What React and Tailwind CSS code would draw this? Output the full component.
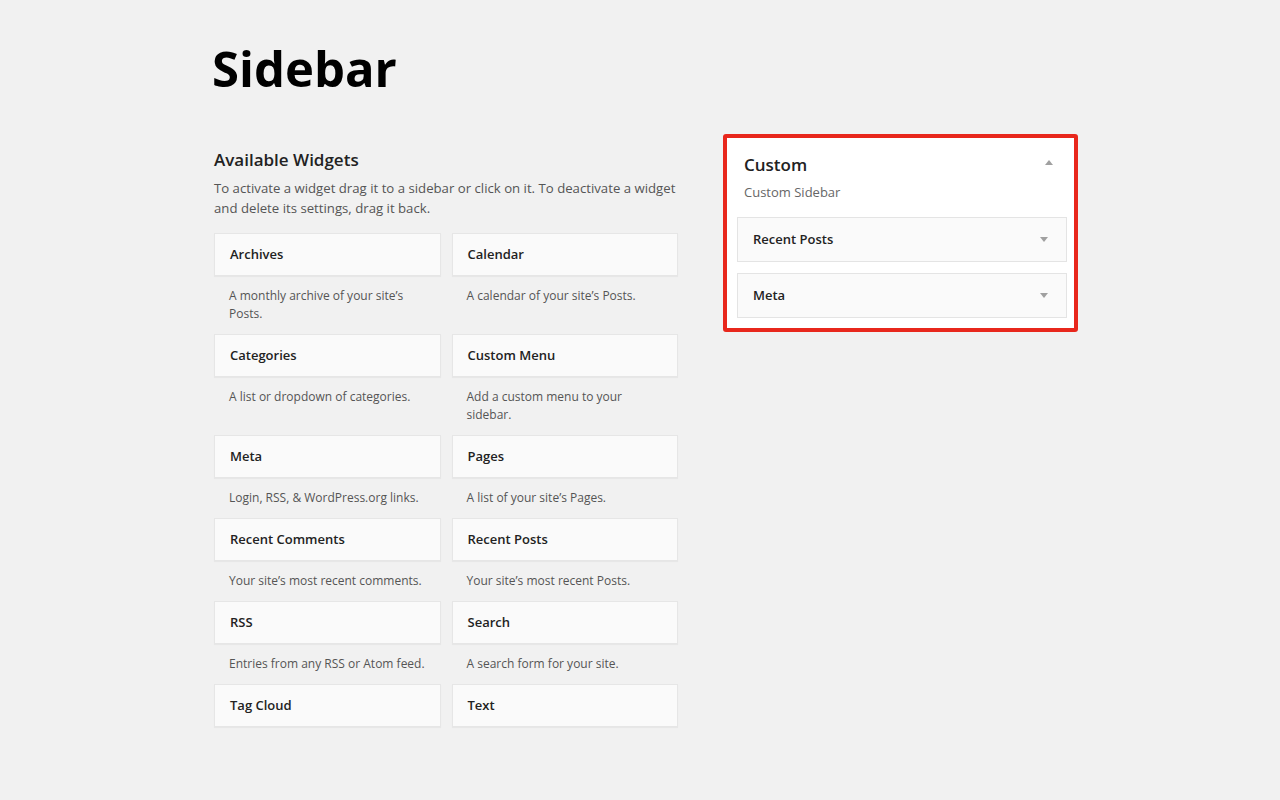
const widgets = [
  ["Archives", "A monthly archive of your site’s Posts."],
  ["Calendar", "A calendar of your site’s Posts."],
  ["Categories", "A list or dropdown of categories."],
  ["Custom Menu", "Add a custom menu to your sidebar."],
  ["Meta", "Login, RSS, & WordPress.org links."],
  ["Pages", "A list of your site’s Pages."],
  ["Recent Comments", "Your site’s most recent comments."],
  ["Recent Posts", "Your site’s most recent Posts."],
  ["RSS", "Entries from any RSS or Atom feed."],
  ["Search", "A search form for your site."],
  ["Tag Cloud", ""],
  ["Text", ""],
];

function Widget({ title, desc }) {
  return (
    <div>
      <div className="h-[43px] bg-[#fafafa] border border-[#e6e6e6] shadow-[0_1px_1px_rgba(0,0,0,0.04)] flex items-center px-[15px] text-[13px] font-semibold text-[#222]">
        {title}
      </div>
      {desc ? (
        <p className="pl-[15px] pr-[12px] pt-[11px] pb-[11px] text-[12px] leading-[18px] text-[#555]">{desc}</p>
      ) : null}
    </div>
  );
}

function Caret({ up }) {
  return (
    <svg width="10" height="6" viewBox="0 0 10 6" className="text-[#a0a0a0]">
      <path d={up ? "M1 6 L5 1 L9 6 Z" : "M1 0 L5 5 L9 0 Z"} fill="currentColor" />
    </svg>
  );
}

export default function App() {
  return (
    <div className="min-h-screen w-full bg-[#f1f1f1]" style={{ fontFamily: '"Open Sans", sans-serif' }}>
      <div className="pl-[212px] pt-[36px]">
        <h1 className="text-[49px] leading-[64px] font-bold text-black">Sidebar</h1>
      </div>
      <div className="flex pl-[214px] pt-[48px] gap-[45px]">
        {/* Available widgets */}
        <div className="w-[464px]">
          <h2 className="text-[17px] leading-[24px] font-semibold text-[#222]">Available Widgets</h2>
          <p className="mt-[6px] text-[13.2px] leading-[20px] text-[#555]">
            To activate a widget drag it to a sidebar or click on it. To deactivate a widget and delete its settings, drag it back.
          </p>
          <div className="mt-[15px] grid grid-cols-2 gap-x-[11px] items-start">
            {widgets.map(([t, d]) => (
              <Widget key={t} title={t} desc={d} />
            ))}
          </div>
        </div>

        {/* Custom sidebar */}
        <div className="-mt-[14px] w-[355px] self-start border-[4px] border-[#e8271c] rounded-[3px] bg-white pl-[10px] pr-[7px] pb-[10px] pt-[12px]">
          <div className="flex items-start justify-between pl-[7px] pr-[13px]">
            <div>
              <div className="text-[17px] leading-[24px] font-semibold text-[#222] pt-[3px]">Custom</div>
              <div className="text-[13px] leading-[18px] text-[#666] mt-[6px]">Custom Sidebar</div>
            </div>
            <div className="pt-[9px]">
              <Caret up />
            </div>
          </div>
          <div className="mt-[16px] flex flex-col gap-[11px]">
            {["Recent Posts", "Meta"].map((t) => (
              <div
                key={t}
                className="h-[45px] bg-[#fafafa] border border-[#e4e4e4] flex items-center justify-between pl-[15px] pr-[17px] text-[13px] font-semibold text-[#222]"
              >
                {t}
                <Caret />
              </div>
            ))}
          </div>
        </div>
      </div>
    </div>
  );
}
